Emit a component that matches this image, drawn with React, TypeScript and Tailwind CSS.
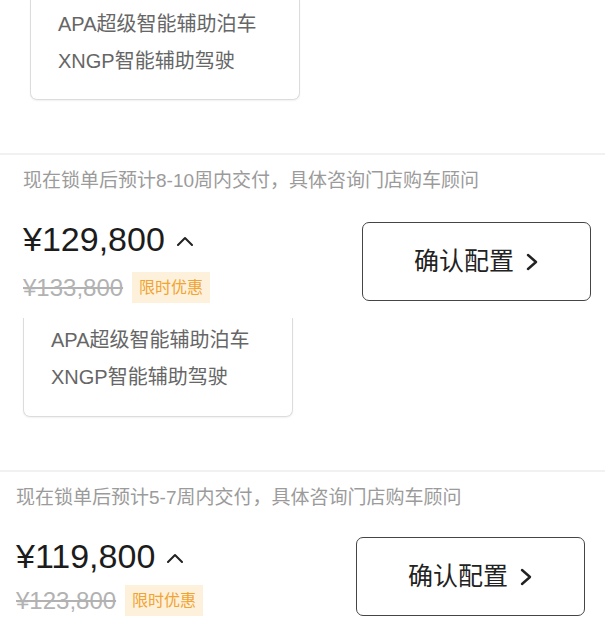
import React from "react";

function FeatureCard({ extra }: { extra: string }) {
  return (
    <div
      className={
        "w-[270px] border-x border-b border-[#dcdcdc] rounded-b-[7px] pl-[27px] text-[20px] leading-[37px] text-[#666666] shadow-[0_1px_2px_rgba(0,0,0,0.06)] " +
        extra
      }
    >
      <div>APA超级智能辅助泊车</div>
      <div>XNGP智能辅助驾驶</div>
    </div>
  );
}

function CaretUp() {
  return (
    <svg width="18" height="10" viewBox="0 0 18 10" fill="none" className="ml-[11px] mt-[4px]">
      <path d="M2 9 L9 2 L16 9" stroke="#222" strokeWidth="2" strokeLinecap="round" strokeLinejoin="round" />
    </svg>
  );
}

function ChevronRight() {
  return (
    <svg width="14" height="18" viewBox="0 0 14 18" fill="none" className="ml-[11px]">
      <path d="M3 2 L11 9 L3 16" stroke="#222" strokeWidth="2.4" strokeLinecap="round" strokeLinejoin="round" />
    </svg>
  );
}

function Section({
  wrap,
  btn,
  row2,
  delivery,
  price,
  old,
  card,
}: {
  wrap: string;
  btn: string;
  row2: string;
  delivery: string;
  price: string;
  old: string;
  card: boolean;
}) {
  return (
    <div>
      <div className="h-[2px] bg-[#f1f1f1]" />
      <div className={wrap}>
        <p className="pt-[13px] text-[19px] leading-[26px] text-[#9b9b9b] whitespace-nowrap">{delivery}</p>
        <div className="flex items-start mt-[25px]">
          <div>
            <div className="flex items-center h-[40px]">
              <span className="text-[34px] leading-[40px] text-[#1c1c1c]">{price}</span>
              <CaretUp />
            </div>
            <div className={"flex items-center " + row2}>
              <span className="text-[24px] leading-[31px] text-[#b2b2b2] line-through decoration-[#b2b2b2]">{old}</span>
              <span className="ml-[9px] h-[31px] px-[7px] flex items-center bg-[#fdf1dc] text-[#f1a431] text-[16px]">
                限时优惠
              </span>
            </div>
          </div>
          <button
            className={
              "ml-auto w-[229px] h-[79px] border-[1.5px] border-[#454545] rounded-[7px] flex items-center justify-center bg-white " +
              btn
            }
          >
            <span className="text-[25px] text-[#222]">确认配置</span>
            <ChevronRight />
          </button>
        </div>
        {card ? <FeatureCard extra="mt-[15px] pt-[4px] pb-[20px]" /> : null}
        <div className="h-[53px]" />
      </div>
    </div>
  );
}

export default function App() {
  return (
    <div className="w-[605px] h-[637px] overflow-hidden bg-white font-['Liberation_Sans','Noto_Sans_CJK_SC',sans-serif]">
      <div className="pl-[30px]">
        <FeatureCard extra="pt-[6px] pb-[19px]" />
        <div className="h-[53px]" />
      </div>
      <Section
        wrap="pl-[23px] pr-[14px]"
        btn="mt-[3px]"
        row2="mt-[13px]"
        delivery="现在锁单后预计8-10周内交付，具体咨询门店购车顾问"
        price="¥129,800"
        old="¥133,800"
        card={true}
      />
      <Section
        wrap="pl-[16px] pr-[20px]"
        btn="mt-[1px]"
        row2="mt-[9px]"
        delivery="现在锁单后预计5-7周内交付，具体咨询门店购车顾问"
        price="¥119,800"
        old="¥123,800"
        card={false}
      />
    </div>
  );
}
